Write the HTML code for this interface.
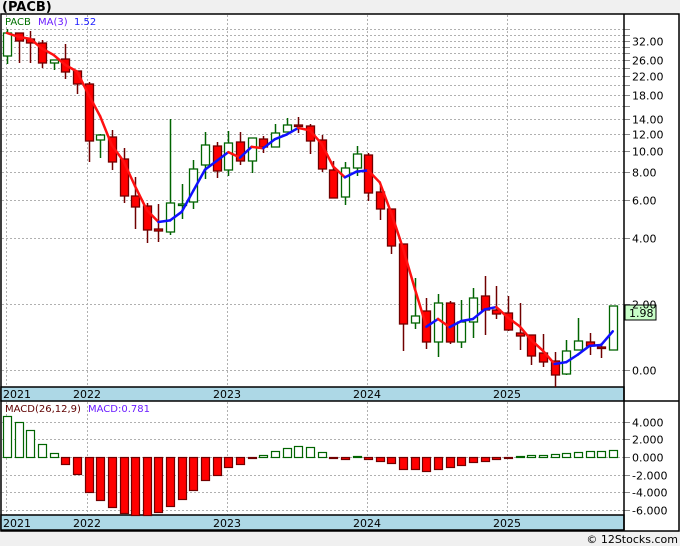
<!DOCTYPE html>
<html><head><meta charset="utf-8"><style>
html,body{margin:0;padding:0;background:#f0f0f0;}
svg{display:block;font-family:"DejaVu Sans","Liberation Sans",sans-serif;}
</style></head><body>
<svg id="s" width="680" height="546" viewBox="0 0 680 546" xmlns="http://www.w3.org/2000/svg">
<rect x="0" y="0" width="680" height="546" fill="#f0f0f0"/>
<text x="2" y="11" font-size="13" font-weight="bold" fill="#000">(PACB)</text>
<rect x="1" y="14" width="678" height="517" fill="#fff" stroke="#000" stroke-width="1.5"/>
<g id="grid"></g>
<rect x="1" y="387" width="623" height="14" fill="#add8e6" stroke="#000" stroke-width="1.5"/>
<rect x="1" y="515" width="623" height="15" fill="#add8e6" stroke="#000" stroke-width="1.5"/>
<line x1="624" y1="14" x2="624" y2="530" stroke="#000" stroke-width="1.5"/>
<line x1="624" y1="401" x2="679" y2="401" stroke="#000" stroke-width="1.5"/>
<g font-size="11" fill="#000">
<text x="3" y="398">2021</text><text x="73" y="398">2022</text><text x="213" y="398">2023</text><text x="353" y="398">2024</text><text x="493" y="398">2025</text>
<text x="3" y="527">2021</text><text x="73" y="527">2022</text><text x="213" y="527">2023</text><text x="353" y="527">2024</text><text x="493" y="527">2025</text>
</g>
<g id="plot"></g>
<text x="5" y="25" font-size="10" fill="#007000">PACB</text>
<text x="38" y="25" font-size="10" fill="#6a1bff">MA(3)</text>
<text x="74" y="25" font-size="10" fill="#2020ff">1.52</text>
<text x="5" y="412" font-size="10" fill="#600000">MACD(26,12,9)</text>
<text x="88" y="412" font-size="10" fill="#6a1bff">MACD:0.781</text>
<rect x="625" y="305" width="31" height="15" fill="#c8ffc8" stroke="#000" stroke-width="1"/>
<text x="629" y="317" font-size="11" fill="#000">1.98</text>
<text x="678" y="543" font-size="11" fill="#000" text-anchor="end">© 12Stocks.com</text>
</svg>
<script>
var NS="http://www.w3.org/2000/svg";
function el(p,t,a){var e=document.createElementNS(NS,t);for(var k in a)e.setAttribute(k,a[k]);p.appendChild(e);return e;}
var grid=document.getElementById("grid"),plot=document.getElementById("plot"),svg=document.getElementById("s");
function Y(p){return 304-95*Math.log(p/2);}
var gv=[36,34,32,30,28,26,24,22,20,18,16,14,12,10,8,6,4,2,1];
var lab={32:"32.00",26:"26.00",22:"22.00",18:"18.00",14:"14.00",12:"12.00",10:"10.00",8:"8.00",6:"6.00",4:"4.00",2:"2.00",1:"0.00"};
gv.forEach(function(v){var y=Math.round(Y(v))+0.5;
 el(grid,"line",{x1:2,y1:y,x2:624,y2:y,stroke:"#b0b0b0","stroke-dasharray":"2,2","stroke-width":1});
 el(grid,"line",{x1:624,y1:y,x2:630,y2:y,stroke:"#888","stroke-width":1});
 if(lab[v]){var t=el(svg,"text",{x:632,y:y+4,"font-size":11,fill:"#000"});t.textContent=lab[v];}
});
[6,87,227,367,507].forEach(function(x){
 el(grid,"line",{x1:x+0.5,y1:15,x2:x+0.5,y2:387,stroke:"#b0b0b0","stroke-dasharray":"2,2"});
 el(grid,"line",{x1:x+0.5,y1:402,x2:x+0.5,y2:515,stroke:"#b0b0b0","stroke-dasharray":"2,2"});
});
var mg=[[4,422],[2,439],[0,457],[-2,475],[-4,492],[-6,510]];
mg.forEach(function(m){var y=m[1]+0.5;
 el(grid,"line",{x1:2,y1:y,x2:624,y2:y,stroke:"#b0b0b0","stroke-dasharray":"2,2"});
 el(grid,"line",{x1:624,y1:y,x2:630,y2:y,stroke:"#888"});
 var t=el(svg,"text",{x:632,y:y+4,"font-size":11,fill:"#000"});t.textContent=(m[0]<0?"-":"")+Math.abs(m[0]).toFixed(3);
});
var C=[[33,56,29,64,1],[33,41,33,63,0],[39,43,31,63,0],[43,63,40,68,0],[60,63,60,70,1],[59,72,44,79,0],[71,84,71,94,0],[84,141,82,162,0],[135,140,134,158,1],[137,162,130,170,0],[159,196,148,203,0],[196,207,177,229,0],[206,230,203,243,0],[229,231,204,242,0],[203,232,119,235,1],[204,205,184,219,1],[169,202,160,209,1],[145,165,132,179,1],[146,171,142,178,0],[143,170,131,176,1],[142,161,132,165,0],[138,161,138,173,1],[139,147,136,153,0],[133,147,124,147,1],[125,132,118,132,1],[125,126,117,133,0],[126,141,124,154,0],[140,169,135,172,0],[170,198,161,198,0],[168,197,162,205,1],[154,168,146,176,1],[155,193,153,201,0],[192,209,186,220,0],[209,246,209,254,0],[244,324,244,351,0],[316,323,278,329,1],[311,342,298,349,0],[303,342,294,357,1],[303,342,301,344,0],[322,342,300,348,1],[298,322,288,338,1],[296,310,276,335,0],[310,314,286,319,0],[313,330,296,331,0],[333,336,303,350,0],[335,356,335,365,0],[353,362,334,367,0],[361,375,352,387,0],[351,374,340,375,1],[341,350,318,350,1],[342,346,333,355,0],[347,348,343,358,0],[306,350,306,350,1]];
var M=[416,422,430,444,453,464,474,492,500,507,513,515,515,512,506,499,490,480,475,467,464,458,455,451,448,446,447,452,458,459,456,459,461,463,469,469,471,469,467,465,462,461,459,458,456,455,455,454,453,452,451,451,450];
function X(i){return 7+i*11.65;}
M.forEach(function(v,i){var x=Math.round(X(i))-4;var up=v<457;var t=Math.min(v,457),h=Math.max(Math.abs(v-457),1);
 el(plot,"rect",{x:x+0.5,y:t+0.5,width:8,height:h,fill:up?"#fff":"#f00",stroke:up?"#006400":"#700000","stroke-width":1.2});});
C.forEach(function(c,i){var x=Math.round(X(i));var col=c[4]?"#006400":"#700000";
 el(plot,"line",{x1:x+0.5,y1:c[2],x2:x+0.5,y2:c[3],stroke:col,"stroke-width":1.5});
 el(plot,"rect",{x:x-3.5,y:c[0],width:8,height:Math.max(c[1]-c[0],1.5),fill:c[4]?"#fff":"#f00",stroke:col,"stroke-width":1.3});});
var P=C.map(function(c){var y=c[4]?c[0]:c[1];return 2*Math.exp((304-y)/95);});
var ma=[];for(var i=0;i<P.length;i++){var a=P.slice(Math.max(0,i-2),i+1);ma.push(Y(a.reduce(function(s,v){return s+v;},0)/a.length));}
for(var i=1;i<ma.length;i++){el(plot,"line",{x1:X(i-1),y1:ma[i-1],x2:X(i),y2:ma[i],stroke:ma[i]>ma[i-1]?"#ff1010":"#1010ff","stroke-width":2.5,"stroke-linecap":"round"});}
</script>
</body></html>
